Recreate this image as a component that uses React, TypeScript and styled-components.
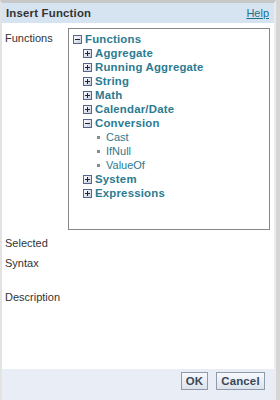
import React from "react";
import styled, { createGlobalStyle } from "styled-components";

const Global = createGlobalStyle`
  html, body { margin: 0; padding: 0; background: #d6d6d6; }
  body { font-family: "Liberation Sans", Arial, sans-serif; }
`;

const Page = styled.div`
  display: flex;
  width: 280px;
  height: 400px;
  overflow: hidden;
`;

const Dialog = styled.div`
  box-sizing: border-box;
  width: 276px;
  height: 400px;
  display: flex;
  flex-direction: column;
  border-top: 3px solid #c8c8c8;
  border-left: 2px solid #e3e3e3;
  border-right: 2px solid #ececec;
  background: #fff;
`;

const TitleBar = styled.div`
  height: 20px;
  display: flex;
  align-items: center;
  justify-content: space-between;
  padding: 0 5px 0 4px;
  background: #d6e4f2;
`;

const Title = styled.span`
  font-size: 11.4px;
  font-weight: bold;
  letter-spacing: 0.2px;
  color: #333;
`;

const HelpLink = styled.a`
  font-size: 11px;
  color: #1d6f8c;
  text-decoration: underline;
`;

const Body = styled.div`
  flex: 1;
  display: grid;
  grid-template-columns: 66px 1fr;
  grid-template-rows: auto 20px 34px 1fr;
  padding: 5px 4px 0 0;
`;

const Label = styled.div<{ $top?: number }>`
  font-size: 11px;
  color: #333;
  padding-left: 3px;
  padding-top: ${(p) => p.$top ?? 0}px;
  line-height: 14px;
`;

const Value = styled.div``;

const TreeBox = styled.div`
  box-sizing: border-box;
  width: 202px;
  height: 202px;
  border: 1px solid #888;
  padding: 3px 0 0 4px;
  margin-bottom: 6px;
`;

const Row = styled.div<{ $indent: number }>`
  display: flex;
  align-items: center;
  height: 14px;
  padding-left: ${(p) => p.$indent}px;
  white-space: nowrap;
`;

const BranchText = styled.span`
  font-size: 11.4px;
  font-weight: bold;
  letter-spacing: 0.2px;
  color: #2c7b91;
  margin-left: 3px;
`;

const LeafText = styled.span`
  font-size: 11px;
  color: #2c7b91;
`;

const Bullet = styled.span`
  width: 3px;
  height: 3px;
  background: #8a8a8a;
  margin-right: 6px;
`;

const Footer = styled.div`
  height: 28px;
  display: flex;
  justify-content: flex-end;
  align-items: flex-start;
  gap: 8px;
  padding: 3px 9px 0 0;
  background: #e9eef6;
`;

const Button = styled.button<{ $w: number }>`
  box-sizing: border-box;
  width: ${(p) => p.$w}px;
  height: 18px;
  padding: 0;
  font-family: "Liberation Sans", Arial, sans-serif;
  font-size: 11.4px;
  font-weight: bold;
  letter-spacing: 0.2px;
  color: #3b4656;
  border: 1px solid #8f9aaa;
  background: linear-gradient(#f7f9fc, #dbe3ec);
`;

const Toggle = ({ open }: { open: boolean }) => (
  <svg width="9" height="9" viewBox="0 0 9 9">
    <defs>
      <linearGradient id="tg" x1="0" y1="0" x2="1" y2="1">
        <stop offset="0" stopColor="#ffffff" />
        <stop offset="1" stopColor="#c3cbdc" />
      </linearGradient>
    </defs>
    <rect x="0.5" y="0.5" width="8" height="8" fill="url(#tg)" stroke="#56658a" />
    <rect x="2" y="4" width="5" height="1" fill="#1c2340" />
    {!open && <rect x="4" y="2" width="1" height="5" fill="#1c2340" />}
  </svg>
);

type Node = { label: string; depth: number; kind: "open" | "closed" | "leaf" };

const nodes: Node[] = [
  { label: "Functions", depth: 0, kind: "open" },
  { label: "Aggregate", depth: 1, kind: "closed" },
  { label: "Running Aggregate", depth: 1, kind: "closed" },
  { label: "String", depth: 1, kind: "closed" },
  { label: "Math", depth: 1, kind: "closed" },
  { label: "Calendar/Date", depth: 1, kind: "closed" },
  { label: "Conversion", depth: 1, kind: "open" },
  { label: "Cast", depth: 2, kind: "leaf" },
  { label: "IfNull", depth: 2, kind: "leaf" },
  { label: "ValueOf", depth: 2, kind: "leaf" },
  { label: "System", depth: 1, kind: "closed" },
  { label: "Expressions", depth: 1, kind: "closed" },
];

export default function App() {
  return (
    <>
      <Global />
      <Page>
        <Dialog>
          <TitleBar>
            <Title>Insert Function</Title>
            <HelpLink href="#">Help</HelpLink>
          </TitleBar>
          <Body>
            <Label $top={3}>Functions</Label>
            <Value>
              <TreeBox>
                {nodes.map((n) =>
                  n.kind === "leaf" ? (
                    <Row key={n.label} $indent={24}>
                      <Bullet />
                      <LeafText>{n.label}</LeafText>
                    </Row>
                  ) : (
                    <Row key={n.label} $indent={n.depth * 10}>
                      <Toggle open={n.kind === "open"} />
                      <BranchText>{n.label}</BranchText>
                    </Row>
                  )
                )}
              </TreeBox>
            </Value>
            <Label>Selected</Label>
            <Value />
            <Label>Syntax</Label>
            <Value />
            <Label>Description</Label>
            <Value />
          </Body>
          <Footer>
            <Button $w={27}>OK</Button>
            <Button $w={49}>Cancel</Button>
          </Footer>
        </Dialog>
      </Page>
    </>
  );
}
